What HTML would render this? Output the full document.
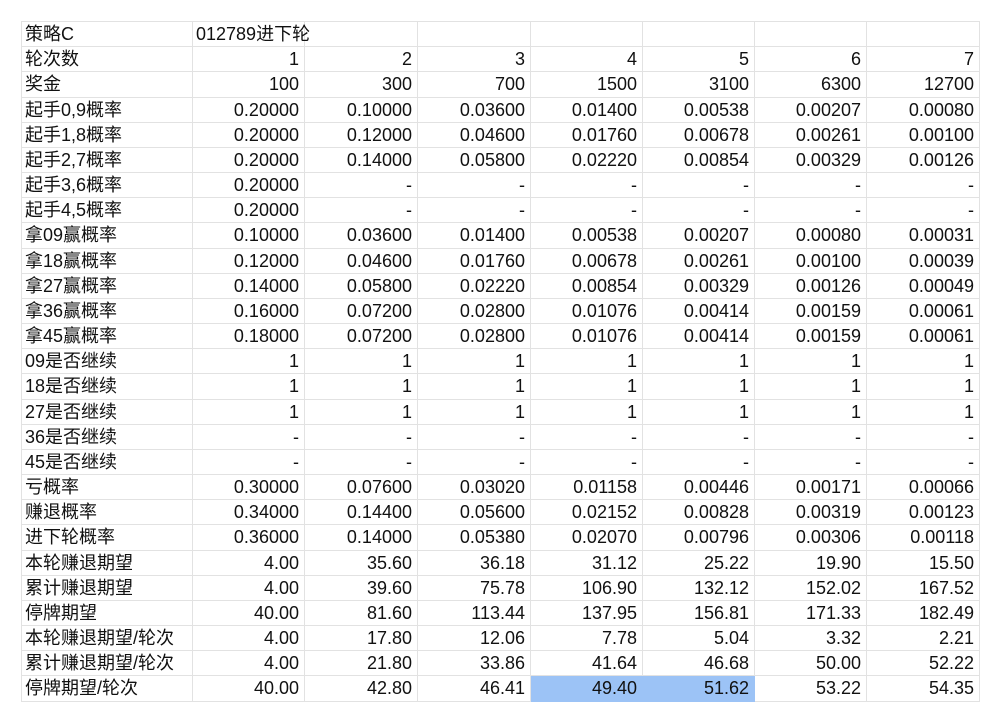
<!DOCTYPE html>
<html><head><meta charset="utf-8"><style>
body{margin:0;background:#fff;width:1001px;height:724px;overflow:hidden;}
table{position:absolute;left:21px;top:21px;border-collapse:collapse;table-layout:fixed;width:958px;font-family:"Liberation Sans","Noto Sans CJK SC",sans-serif;font-size:18px;color:#111;}
td{border:1px solid #e2e2e2;padding:0;text-align:right;white-space:nowrap;vertical-align:top;}
td>div{height:24.185px;line-height:25px;overflow:hidden;padding:0 5px 0 3px;}
td:first-child{text-align:left;}
.l{text-align:left;}
.h{background:#9cc3f6;border-color:#9cc3f6;}
</style></head><body>
<table>
<colgroup><col style="width:171px"><col style="width:112px"><col style="width:113px"><col style="width:113px"><col style="width:112px"><col style="width:112px"><col style="width:112px"><col style="width:113px"></colgroup>
<tr><td><div>策略C</div></td><td class="l"><div style="overflow:visible">012789进下轮</div></td><td><div></div></td><td><div></div></td><td><div></div></td><td><div></div></td><td><div></div></td><td><div></div></td></tr>
<tr><td><div>轮次数</div></td><td><div>1</div></td><td><div>2</div></td><td><div>3</div></td><td><div>4</div></td><td><div>5</div></td><td><div>6</div></td><td><div>7</div></td></tr>
<tr><td><div>奖金</div></td><td><div>100</div></td><td><div>300</div></td><td><div>700</div></td><td><div>1500</div></td><td><div>3100</div></td><td><div>6300</div></td><td><div>12700</div></td></tr>
<tr><td><div>起手0,9概率</div></td><td><div>0.20000</div></td><td><div>0.10000</div></td><td><div>0.03600</div></td><td><div>0.01400</div></td><td><div>0.00538</div></td><td><div>0.00207</div></td><td><div>0.00080</div></td></tr>
<tr><td><div>起手1,8概率</div></td><td><div>0.20000</div></td><td><div>0.12000</div></td><td><div>0.04600</div></td><td><div>0.01760</div></td><td><div>0.00678</div></td><td><div>0.00261</div></td><td><div>0.00100</div></td></tr>
<tr><td><div>起手2,7概率</div></td><td><div>0.20000</div></td><td><div>0.14000</div></td><td><div>0.05800</div></td><td><div>0.02220</div></td><td><div>0.00854</div></td><td><div>0.00329</div></td><td><div>0.00126</div></td></tr>
<tr><td><div>起手3,6概率</div></td><td><div>0.20000</div></td><td><div>-</div></td><td><div>-</div></td><td><div>-</div></td><td><div>-</div></td><td><div>-</div></td><td><div>-</div></td></tr>
<tr><td><div>起手4,5概率</div></td><td><div>0.20000</div></td><td><div>-</div></td><td><div>-</div></td><td><div>-</div></td><td><div>-</div></td><td><div>-</div></td><td><div>-</div></td></tr>
<tr><td><div>拿09赢概率</div></td><td><div>0.10000</div></td><td><div>0.03600</div></td><td><div>0.01400</div></td><td><div>0.00538</div></td><td><div>0.00207</div></td><td><div>0.00080</div></td><td><div>0.00031</div></td></tr>
<tr><td><div>拿18赢概率</div></td><td><div>0.12000</div></td><td><div>0.04600</div></td><td><div>0.01760</div></td><td><div>0.00678</div></td><td><div>0.00261</div></td><td><div>0.00100</div></td><td><div>0.00039</div></td></tr>
<tr><td><div>拿27赢概率</div></td><td><div>0.14000</div></td><td><div>0.05800</div></td><td><div>0.02220</div></td><td><div>0.00854</div></td><td><div>0.00329</div></td><td><div>0.00126</div></td><td><div>0.00049</div></td></tr>
<tr><td><div>拿36赢概率</div></td><td><div>0.16000</div></td><td><div>0.07200</div></td><td><div>0.02800</div></td><td><div>0.01076</div></td><td><div>0.00414</div></td><td><div>0.00159</div></td><td><div>0.00061</div></td></tr>
<tr><td><div>拿45赢概率</div></td><td><div>0.18000</div></td><td><div>0.07200</div></td><td><div>0.02800</div></td><td><div>0.01076</div></td><td><div>0.00414</div></td><td><div>0.00159</div></td><td><div>0.00061</div></td></tr>
<tr><td><div>09是否继续</div></td><td><div>1</div></td><td><div>1</div></td><td><div>1</div></td><td><div>1</div></td><td><div>1</div></td><td><div>1</div></td><td><div>1</div></td></tr>
<tr><td><div>18是否继续</div></td><td><div>1</div></td><td><div>1</div></td><td><div>1</div></td><td><div>1</div></td><td><div>1</div></td><td><div>1</div></td><td><div>1</div></td></tr>
<tr><td><div>27是否继续</div></td><td><div>1</div></td><td><div>1</div></td><td><div>1</div></td><td><div>1</div></td><td><div>1</div></td><td><div>1</div></td><td><div>1</div></td></tr>
<tr><td><div>36是否继续</div></td><td><div>-</div></td><td><div>-</div></td><td><div>-</div></td><td><div>-</div></td><td><div>-</div></td><td><div>-</div></td><td><div>-</div></td></tr>
<tr><td><div>45是否继续</div></td><td><div>-</div></td><td><div>-</div></td><td><div>-</div></td><td><div>-</div></td><td><div>-</div></td><td><div>-</div></td><td><div>-</div></td></tr>
<tr><td><div>亏概率</div></td><td><div>0.30000</div></td><td><div>0.07600</div></td><td><div>0.03020</div></td><td><div>0.01158</div></td><td><div>0.00446</div></td><td><div>0.00171</div></td><td><div>0.00066</div></td></tr>
<tr><td><div>赚退概率</div></td><td><div>0.34000</div></td><td><div>0.14400</div></td><td><div>0.05600</div></td><td><div>0.02152</div></td><td><div>0.00828</div></td><td><div>0.00319</div></td><td><div>0.00123</div></td></tr>
<tr><td><div>进下轮概率</div></td><td><div>0.36000</div></td><td><div>0.14000</div></td><td><div>0.05380</div></td><td><div>0.02070</div></td><td><div>0.00796</div></td><td><div>0.00306</div></td><td><div>0.00118</div></td></tr>
<tr><td><div>本轮赚退期望</div></td><td><div>4.00</div></td><td><div>35.60</div></td><td><div>36.18</div></td><td><div>31.12</div></td><td><div>25.22</div></td><td><div>19.90</div></td><td><div>15.50</div></td></tr>
<tr><td><div>累计赚退期望</div></td><td><div>4.00</div></td><td><div>39.60</div></td><td><div>75.78</div></td><td><div>106.90</div></td><td><div>132.12</div></td><td><div>152.02</div></td><td><div>167.52</div></td></tr>
<tr><td><div>停牌期望</div></td><td><div>40.00</div></td><td><div>81.60</div></td><td><div>113.44</div></td><td><div>137.95</div></td><td><div>156.81</div></td><td><div>171.33</div></td><td><div>182.49</div></td></tr>
<tr><td><div>本轮赚退期望/轮次</div></td><td><div>4.00</div></td><td><div>17.80</div></td><td><div>12.06</div></td><td><div>7.78</div></td><td><div>5.04</div></td><td><div>3.32</div></td><td><div>2.21</div></td></tr>
<tr><td><div>累计赚退期望/轮次</div></td><td><div>4.00</div></td><td><div>21.80</div></td><td><div>33.86</div></td><td><div>41.64</div></td><td><div>46.68</div></td><td><div>50.00</div></td><td><div>52.22</div></td></tr>
<tr><td><div>停牌期望/轮次</div></td><td><div>40.00</div></td><td><div>42.80</div></td><td><div>46.41</div></td><td class="h"><div>49.40</div></td><td class="h"><div>51.62</div></td><td><div>53.22</div></td><td><div>54.35</div></td></tr>
</table>
</body></html>
